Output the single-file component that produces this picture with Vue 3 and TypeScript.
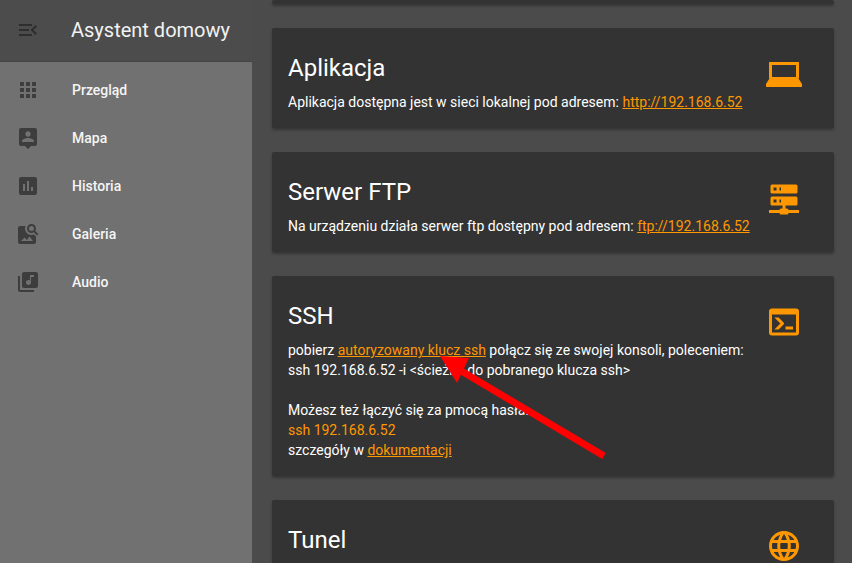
<script setup lang="ts">
interface NavItem { label: string; path: string; rule?: 'evenodd' }
const nav: NavItem[] = [
  { label: 'Przegląd', path: 'M4 8h4V4H4v4zm6 12h4v-4h-4v4zm-6 0h4v-4H4v4zm0-6h4v-4H4v4zm6 0h4v-4h-4v4zm6-10v4h4V4h-4zm-6 4h4V4h-4v4zm6 6h4v-4h-4v4zm0 6h4v-4h-4v4z' },
  { label: 'Mapa', path: 'M19 2H5c-1.11 0-2 .9-2 2v14c0 1.1.89 2 2 2h4l3 3 3-3h4c1.1 0 2-.9 2-2V4c0-1.1-.9-2-2-2zm-7 3.3c1.49 0 2.7 1.21 2.7 2.7 0 1.49-1.21 2.7-2.7 2.7-1.49 0-2.7-1.21-2.7-2.7 0-1.49 1.21-2.7 2.7-2.7zM18 16H6v-.9c0-2 4-3.1 6-3.1s6 1.1 6 3.1v.9z' },
  { label: 'Historia', path: 'M19 3H5c-1.1 0-2 .9-2 2v14c0 1.1.9 2 2 2h14c1.1 0 2-.9 2-2V5c0-1.1-.9-2-2-2zM9 17H7v-7h2v7zm4 0h-2V7h2v10zm4 0h-2v-4h2v4z' },
  { label: 'Galeria', rule: 'evenodd', path: 'M4 4h5.5C9.2 4.8 9 5.6 9 6.5 9 10.1 11.9 13 15.5 13c.9 0 1.7-.2 2.5-.5l2 2V20c0 1.1-.9 2-2 2H4c-1.1 0-2-.9-2-2V6c0-1.1.9-2 2-2zM5 19h12l-3.5-4.5-2.75 3.5-2-2.5L5 19zM15.5 2C18 2 20 4 20 6.5c0 .88-.25 1.71-.69 2.4L22.39 12 21 13.39l-3.12-3.07c-.69.43-1.51.68-2.38.68C13 11 11 9 11 6.5S13 2 15.5 2zm0 2a2.5 2.5 0 1 0 0 5 2.5 2.5 0 0 0 0-5z' },
  { label: 'Audio', path: 'M20 2H8c-1.1 0-2 .9-2 2v12c0 1.1.9 2 2 2h12c1.1 0 2-.9 2-2V4c0-1.1-.9-2-2-2zm-2 5h-3v5.5c0 1.38-1.12 2.5-2.5 2.5S10 13.88 10 12.5s1.12-2.5 2.5-2.5c.57 0 1.08.19 1.5.51V5h4v2zM4 6H2v14c0 1.1.9 2 2 2h14v-2H4V6z' }
]
const icons = {
  laptop: 'M2 4h20v10.8H2zM4 6v8h16V6zM2.4 14.8h19.2L24 18.6v2H0v-2z',
  server: 'M13,19H14A1,1 0 0,1 15,20H22V22H15A1,1 0 0,1 14,23H10A1,1 0 0,1 9,22H2V20H9A1,1 0 0,1 10,19H11V17H4A1,1 0 0,1 3,16V12A1,1 0 0,1 4,11H20A1,1 0 0,1 21,12V16A1,1 0 0,1 20,17H13V19M4,3H20A1,1 0 0,1 21,4V8A1,1 0 0,1 20,9H4A1,1 0 0,1 3,8V4A1,1 0 0,1 4,3M9,7H10V5H9V7M9,15H10V13H9V15M5,5V7H7V5H5M5,13V15H7V13H5Z',
  console: 'M20,19V7H4V19H20M20,3A2,2 0 0,1 22,5V19A2,2 0 0,1 20,21H4A2,2 0 0,1 2,19V5C2,3.89 2.9,3 4,3H20M13,17V15H18V17H13M9.58,13L5.57,9H8.4L11.7,12.3C12.09,12.69 12.09,13.33 11.7,13.72L8.42,17H5.59L9.58,13Z',
  globe: 'M11.99 2C6.47 2 2 6.48 2 12s4.47 10 9.99 10C17.52 22 22 17.52 22 12S17.52 2 11.99 2zm6.93 6h-2.95c-.32-1.25-.78-2.45-1.38-3.56 1.84.63 3.37 1.91 4.33 3.56zM12 4.04c.83 1.2 1.48 2.53 1.91 3.96h-3.82c.43-1.43 1.08-2.76 1.91-3.96zM4.26 14C4.1 13.36 4 12.69 4 12s.1-1.36.26-2h3.38c-.08.66-.14 1.32-.14 2 0 .68.06 1.34.14 2H4.26zm.82 2h2.95c.32 1.25.78 2.45 1.38 3.56-1.84-.63-3.37-1.9-4.33-3.56zm2.95-8H5.08c.96-1.66 2.49-2.93 4.33-3.56C8.81 5.55 8.35 6.75 8.03 8zM12 19.96c-.83-1.2-1.48-2.53-1.91-3.96h3.82c-.43 1.43-1.08 2.76-1.91 3.96zM14.34 14H9.66c-.09-.66-.16-1.32-.16-2 0-.68.07-1.35.16-2h4.68c.09.65.16 1.32.16 2 0 .68-.07 1.34-.16 2zm.25 5.56c.6-1.11 1.06-2.31 1.38-3.56h2.95c-.96 1.65-2.49 2.93-4.33 3.56zM16.36 14c.08-.66.14-1.32.14-2 0-.68-.06-1.34-.14-2h3.38c.16.64.26 1.31.26 2s-.1 1.36-.26 2h-3.38z'
}
</script>

<template>
  <div class="app">
    <aside class="sidebar">
      <header class="brand">
        <svg class="nav-icon menu" viewBox="0 0 24 24"><path d="M3 18h13v-2H3v2zm0-5h10v-2H3v2zm0-7v2h13V6H3zm18 9.59L17.42 12 21 8.41 19.59 7l-5 5 5 5L21 15.59z" /></svg>
        <span class="brand-title">Asystent domowy</span>
      </header>
      <nav class="nav">
        <a v-for="item in nav" :key="item.label" class="nav-item">
          <svg class="nav-icon" viewBox="0 0 24 24"><path :d="item.path" :fill-rule="item.rule" /></svg>
          <span>{{ item.label }}</span>
        </a>
      </nav>
    </aside>

    <main class="main">
      <div class="card stub"></div>

      <section class="card">
        <div class="body">
          <h2>Aplikacja</h2>
          <p>Aplikacja dostępna jest w sieci lokalnej pod adresem: <a class="link">http://192.168.6.52</a></p>
        </div>
        <svg class="card-icon" viewBox="0 0 24 24"><path :d="icons.laptop" fill-rule="evenodd" /></svg>
      </section>

      <section class="card">
        <div class="body">
          <h2>Serwer FTP</h2>
          <p>Na urządzeniu działa serwer ftp dostępny pod adresem: <a class="link">ftp://192.168.6.52</a></p>
        </div>
        <svg class="card-icon" viewBox="0 0 24 24"><path :d="icons.server" /></svg>
      </section>

      <section class="card">
        <div class="body">
          <h2>SSH</h2>
          <p>
            pobierz <a class="link">autoryzowany klucz ssh</a> połącz się ze swojej konsoli, poleceniem:<br />
            ssh 192.168.6.52 -i &lt;ścieżka do pobranego klucza ssh&gt;<br />
            <br />
            Możesz też łączyć się za pmocą hasła:<br />
            <span class="accent">ssh 192.168.6.52</span><br />
            szczegóły w <a class="link">dokumentacji</a>
          </p>
        </div>
        <svg class="card-icon" viewBox="0 0 24 24"><path :d="icons.console" /></svg>
      </section>

      <section class="card">
        <div class="body">
          <h2>Tunel</h2>
        </div>
        <svg class="card-icon" viewBox="0 0 24 24"><path :d="icons.globe" /></svg>
      </section>
    </main>

    <svg class="arrow" width="852" height="563" viewBox="0 0 852 563">
      <line x1="604" y1="456" x2="458" y2="369" stroke="#ff0000" stroke-width="7" />
      <polygon points="440,356 469,358 457,383" fill="#ff0000" />
    </svg>
  </div>
</template>

<style scoped>
.app {
  position: relative;
  display: flex;
  width: 852px;
  height: 563px;
  overflow: hidden;
  font-family: Roboto, "Liberation Sans", sans-serif;
  font-size: 14px;
  line-height: 20px;
  color: #fff;
  background: #4b4b4b;
}
.sidebar {
  flex: 0 0 253px;
  box-sizing: border-box;
  display: flex;
  flex-direction: column;
  background: #717171;
  border-right: 1px solid #4b4b4b;
}
.brand {
  height: 62px;
  box-sizing: border-box;
  display: flex;
  align-items: center;
  padding: 0 0 2px 16px;
  gap: 31px;
  background: #4c4c4c;
  border-bottom: 1px solid #444444;
}
.brand-title {
  font-size: 20px;
  color: #f2f2f2;
}
.nav {
  padding-top: 4px;
}
.nav-item {
  display: flex;
  align-items: center;
  height: 48px;
  padding-left: 16px;
  gap: 32px;
  font-weight: 500;
  color: #f5f5f5;
}
.nav-icon {
  flex: none;
  width: 24px;
  height: 24px;
  fill: #3d3d3d;
}
.nav-icon.menu {
  fill: #2e2e2e;
}
.main {
  flex: 1;
  min-width: 0;
  display: flex;
  flex-direction: column;
  gap: 24px;
  padding: 0 18px 0 19px;
}
.card {
  flex: none;
  display: flex;
  background: #333333;
  border-radius: 2px;
  padding: 24px 32px 16px 16px;
  box-shadow: 0 2px 3px rgba(0, 0, 0, 0.3);
}
.card.stub {
  height: 4px;
  padding: 0;
}
.body {
  flex: 1;
  min-width: 0;
}
h2 {
  margin: 0;
  font-size: 24px;
  font-weight: 400;
  line-height: 32px;
}
p {
  margin: 8px 0 0;
  white-space: nowrap;
}
.link {
  color: #ff9800;
  text-decoration: underline;
}
.accent {
  color: #ff9800;
}
.card-icon {
  flex: none;
  width: 36px;
  height: 36px;
  margin-top: 4px;
  fill: #ff9800;
}
.arrow {
  position: absolute;
  top: 0;
  left: 0;
  pointer-events: none;
}
</style>
